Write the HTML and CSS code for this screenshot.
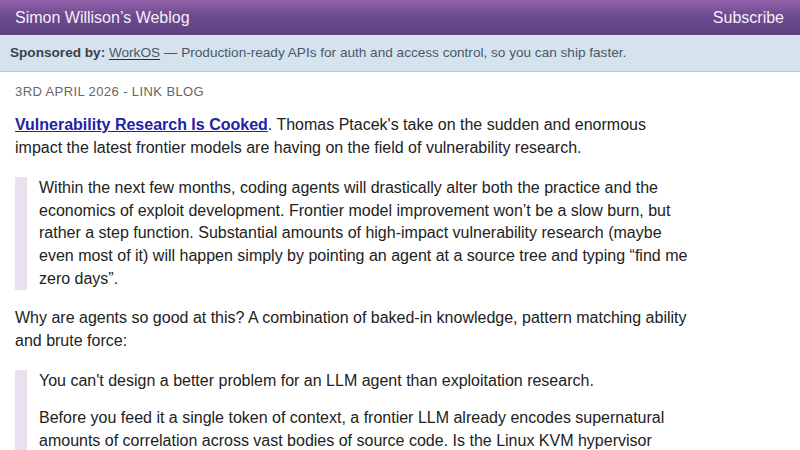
FILE: index.html
```html
<!DOCTYPE html>
<html lang="en">
<head>
<meta charset="utf-8">
<title>Simon Willison’s Weblog</title>
<link rel="stylesheet" href="styles.css">
</head>
<body>
<header class="site-header">
  <a class="site-title" href="#">Simon Willison’s Weblog</a>
  <a class="subscribe" href="#">Subscribe</a>
</header>
<div class="sponsor">
  <p class="sponsor-text"><strong>Sponsored by:</strong> <a href="#">WorkOS</a> — Production-ready APIs for auth and access control, so you can ship faster.</p>
</div>
<main class="content">
  <div class="meta">3rd April 2026 - Link Blog</div>
  <p><a class="title-link" href="#">Vulnerability Research Is Cooked</a>. Thomas Ptacek's take on the sudden and enormous impact the latest frontier models are having on the field of vulnerability research.</p>
  <blockquote>
    <p>Within the next few months, coding agents will drastically alter both the practice and the economics of exploit development. Frontier model improvement won’t be a slow burn, but rather a step function. Substantial amounts of high-impact vulnerability research (maybe even most of it) will happen simply by pointing an agent at a source tree and typing “find me zero days”.</p>
  </blockquote>
  <p>Why are agents so good at this? A combination of baked-in knowledge, pattern matching ability and brute force:</p>
  <blockquote>
    <p>You can't design a better problem for an LLM agent than exploitation research.</p>
    <p>Before you feed it a single token of context, a frontier LLM already encodes supernatural amounts of correlation across vast bodies of source code. Is the Linux KVM hypervisor connected to the hrtimer subsystem, workqueue, or perf_event? The model knows.</p>
  </blockquote>
</main>
</body>
</html>
```

FILE: styles.css
```css
html, body {
  margin: 0;
  padding: 0;
  background: #fff;
}
body {
  font-family: "Liberation Sans", Arial, Helvetica, sans-serif;
  color: #222;
  font-size: 16px;
}
.site-header {
  height: 35px;
  display: flex;
  align-items: center;
  justify-content: space-between;
  padding: 0 16px 0 15px;
  background: linear-gradient(to bottom, #9462ab 0%, #6d4a8f 45%, #5f4181 100%);
}
.site-header a {
  color: #f4eefa;
  text-decoration: none;
  font-size: 16px;
}
.sponsor {
  padding: 0 10px;
  background: #d5e3ef;
  border-bottom: 1px solid #b6c6d6;
  color: #4b5867;
}
.sponsor .sponsor-text {
  margin: 0;
  font-size: 13.6px;
  line-height: 36px;
  white-space: nowrap;
}
.sponsor strong {
  color: #37414d;
}
.sponsor a {
  color: #4b5867;
  text-decoration: underline;
  text-decoration-color: #23237a;
  text-underline-offset: 2px;
}
.content {
  width: 678px;
  padding: 0 15px;
}
.meta {
  margin-top: 12px;
  font-size: 13px;
  line-height: 15px;
  letter-spacing: 0.4px;
  text-transform: uppercase;
  color: #666;
}
p {
  margin: 0 0 18px;
  line-height: 22.6px;
}
.content > .meta + p {
  margin-top: 15px;
}
.title-link {
  font-weight: bold;
  color: #2222a8;
  text-decoration: underline;
}
blockquote {
  margin: 0 0 17px;
  padding: 0 0 0 12px;
  border-left: 12px solid #e8e2ef;
}
blockquote p {
  margin: 0 0 14px;
}
blockquote p:last-child {
  margin-bottom: 0;
}
```
